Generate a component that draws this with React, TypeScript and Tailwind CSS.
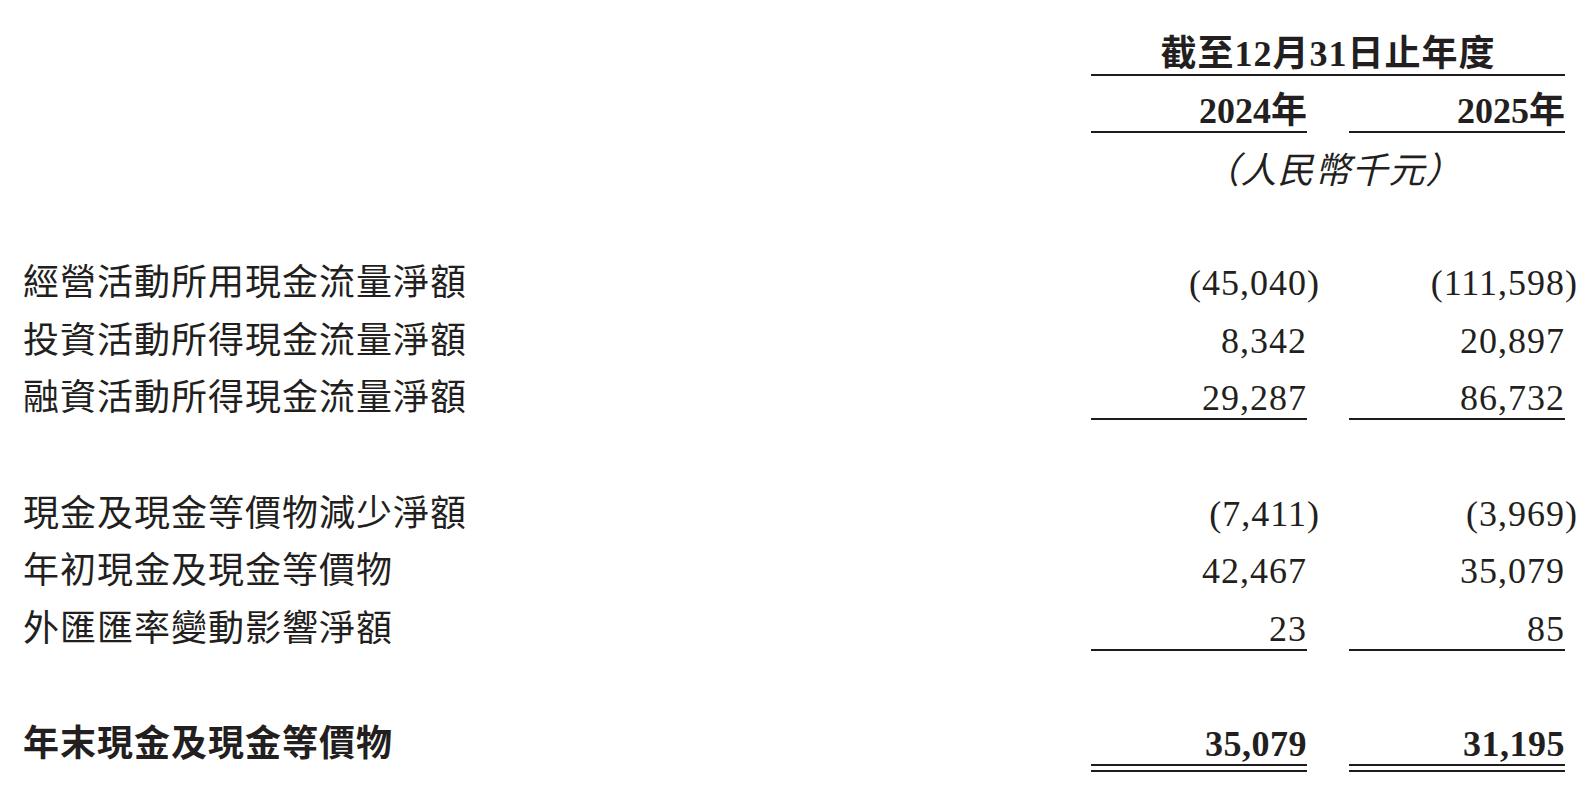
import React from 'react';

interface CashRow {
  label: string;
  y2024: string;
  y2025: string;
  neg2024?: boolean;
  neg2025?: boolean;
  underline?: boolean;
}

const operating: CashRow[] = [
  { label: '經營活動所用現金流量淨額', y2024: '45,040', y2025: '111,598', neg2024: true, neg2025: true },
  { label: '投資活動所得現金流量淨額', y2024: '8,342', y2025: '20,897' },
  { label: '融資活動所得現金流量淨額', y2024: '29,287', y2025: '86,732', underline: true },
];

const movement: CashRow[] = [
  { label: '現金及現金等價物減少淨額', y2024: '7,411', y2025: '3,969', neg2024: true, neg2025: true },
  { label: '年初現金及現金等價物', y2024: '42,467', y2025: '35,079' },
  { label: '外匯匯率變動影響淨額', y2024: '23', y2025: '85', underline: true },
];

const Amount = ({ value, negative }: { value: string; negative?: boolean }) =>
  negative ? (
    <>
      ({value}
      <span className="-mr-[13px]">)</span>
    </>
  ) : (
    <>{value}</>
  );

const Row = ({ row }: { row: CashRow }) => (
  <div className="flex h-[57.5px] pt-[8px]">
    <div className="flex-1 leading-[40px] tracking-[1px]">{row.label}</div>
    <div
      className={`w-[216px] h-[42px] leading-[40px] text-right tracking-[1px] ${row.underline ? 'border-b-2 border-[#1f1b1c]' : ''}`}
    >
      <Amount value={row.y2024} negative={row.neg2024} />
    </div>
    <div
      className={`ml-[42px] w-[216px] h-[42px] leading-[40px] text-right tracking-[1px] ${row.underline ? 'border-b-2 border-[#1f1b1c]' : ''}`}
    >
      <Amount value={row.y2025} negative={row.neg2025} />
    </div>
  </div>
);

export default function App() {
  return (
    <div className="w-[1594px] h-[808px] overflow-hidden bg-white text-[#231f20] text-[36px] font-['Liberation_Serif','Noto_Sans_CJK_TC',serif]">
      <div className="pl-[23px] pr-[29px] pt-[34px]">
        {/* header */}
        <div className="flex">
          <div className="flex-1" />
          <div className="w-[474px] h-[42px] leading-[40px] text-center font-bold tracking-[1px] border-b-2 border-[#1f1b1c]">
            截至12月31日止年度
          </div>
        </div>
        <div className="flex mt-[15px]">
          <div className="flex-1" />
          <div className="w-[216px] h-[42px] leading-[40px] text-right font-bold border-b-2 border-[#1f1b1c]">
            2024年
          </div>
          <div className="ml-[42px] w-[216px] h-[42px] leading-[40px] text-right font-bold border-b-2 border-[#1f1b1c]">
            2025年
          </div>
        </div>
        <div className="flex mt-[18px]">
          <div className="flex-1" />
          <div className="w-[474px] pl-[10px] leading-[40px] text-center italic tracking-[1px]">（人民幣千元）</div>
        </div>

        {/* body */}
        <div className="mt-[64px]">
          {operating.map((r) => (
            <Row key={r.label} row={r} />
          ))}
          <div className="h-[58px]" />
          {movement.map((r) => (
            <Row key={r.label} row={r} />
          ))}
          <div className="h-[57.5px]" />
          <div className="flex h-[57.5px] pt-[8px] font-bold">
            <div className="flex-1 leading-[40px] tracking-[1px]">年末現金及現金等價物</div>
            <div className="w-[216px] flex flex-col">
              <div className="h-[42px] leading-[40px] text-right tracking-[0.5px] border-b-2 border-[#1f1b1c]">35,079</div>
              <div className="mt-[4px] h-[2px] bg-[#1f1b1c]" />
            </div>
            <div className="ml-[42px] w-[216px] flex flex-col">
              <div className="h-[42px] leading-[40px] text-right tracking-[0.5px] border-b-2 border-[#1f1b1c]">31,195</div>
              <div className="mt-[4px] h-[2px] bg-[#1f1b1c]" />
            </div>
          </div>
        </div>
      </div>
    </div>
  );
}
